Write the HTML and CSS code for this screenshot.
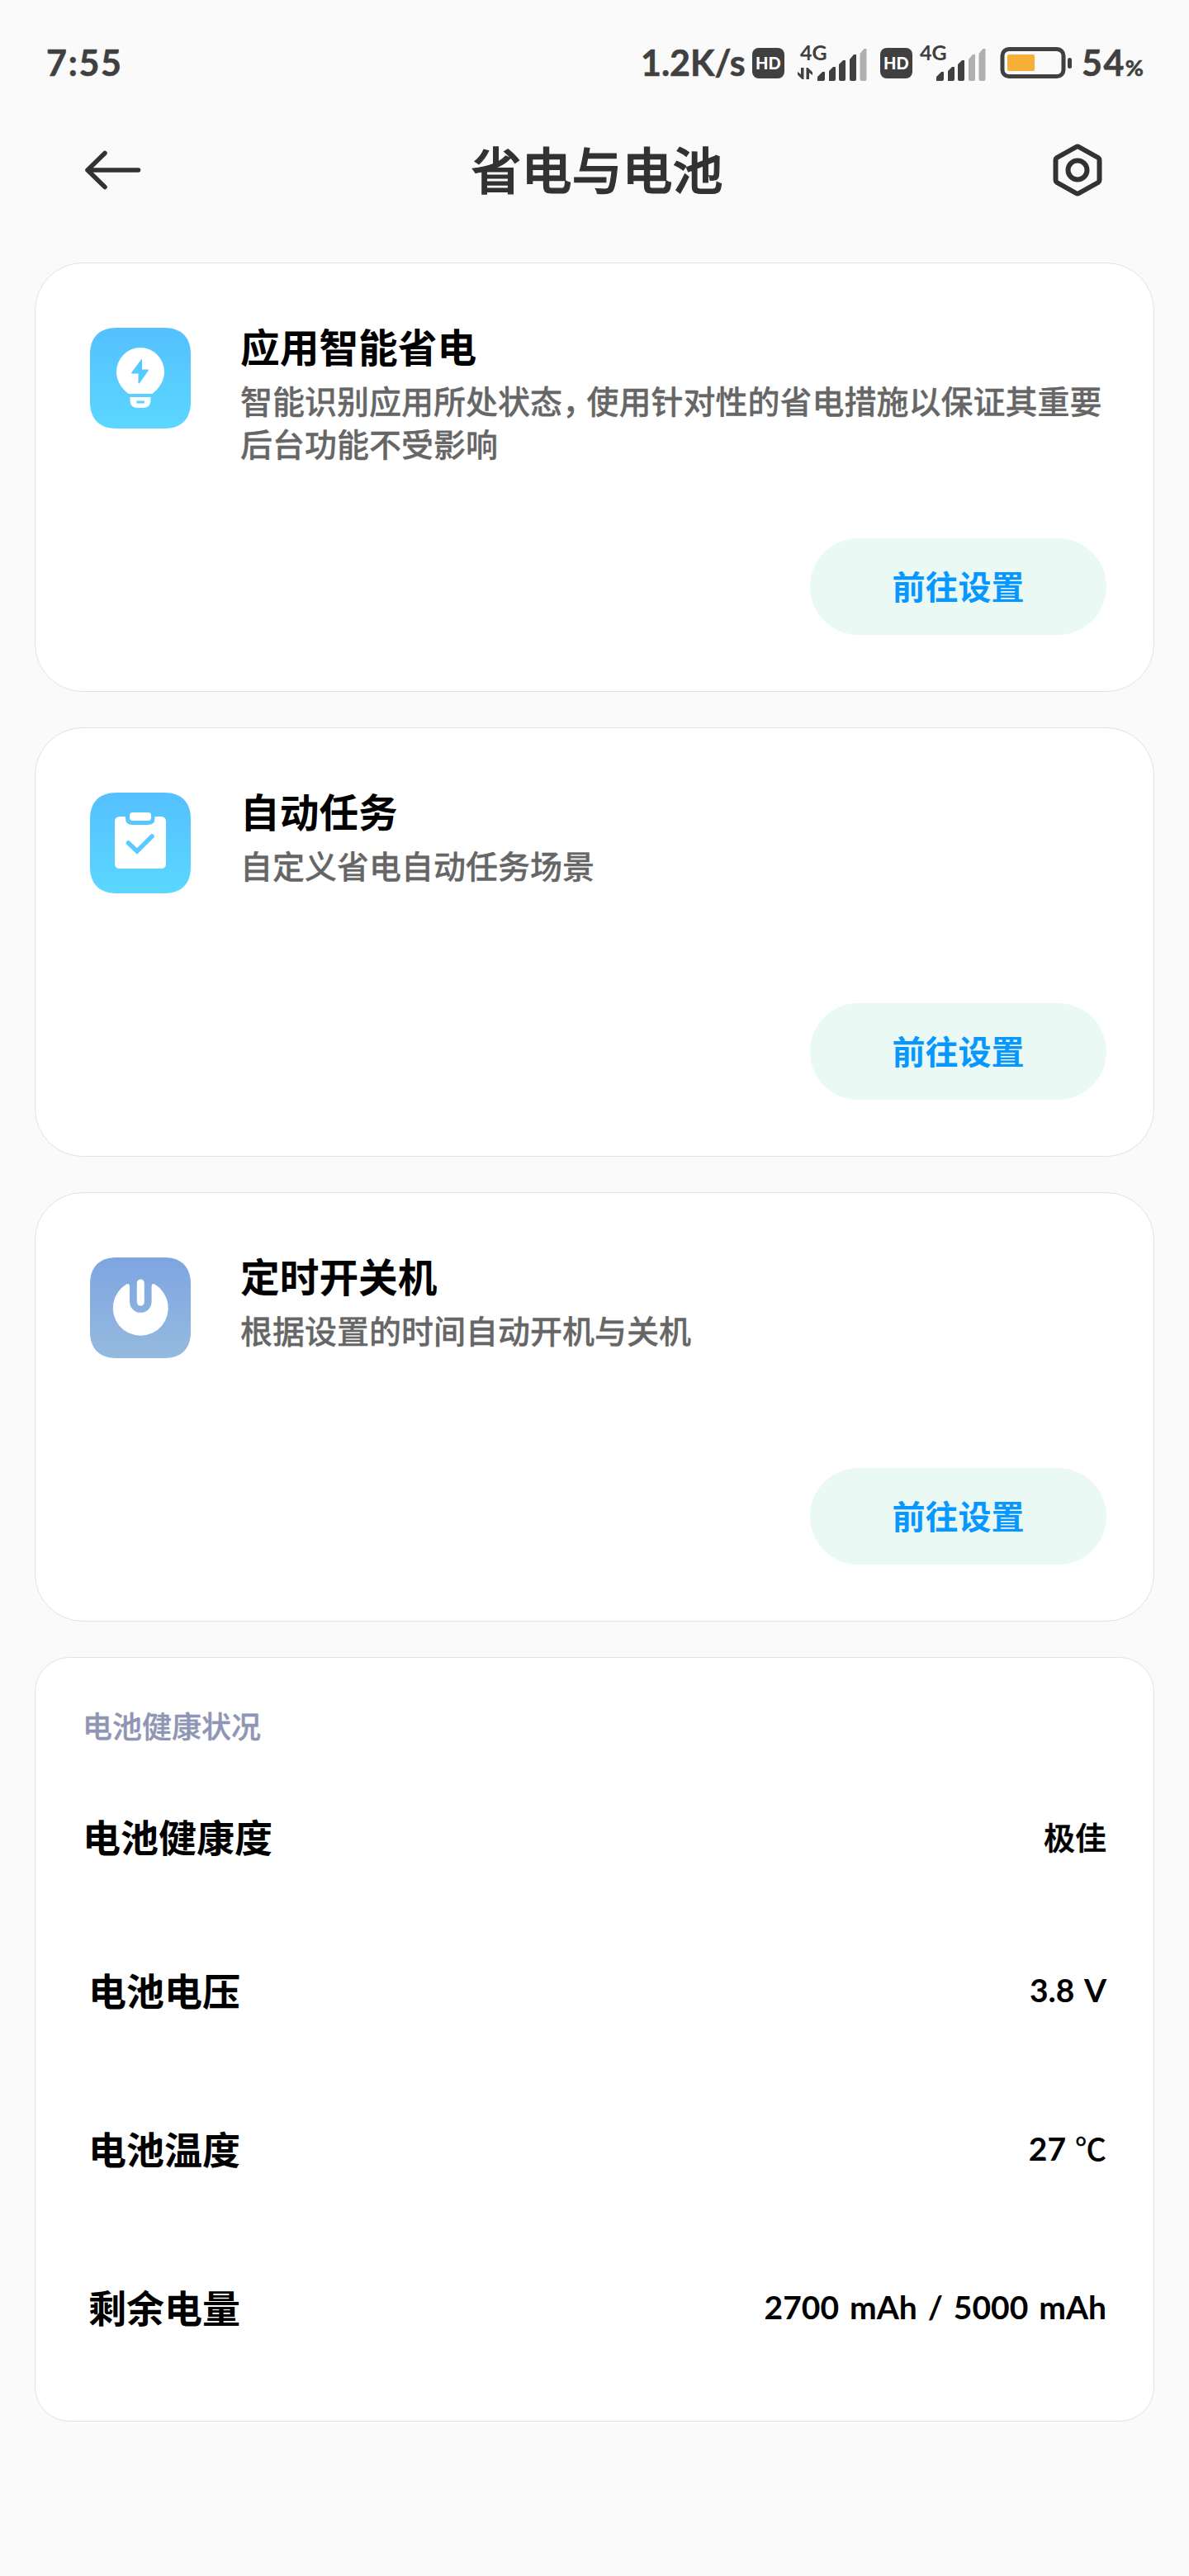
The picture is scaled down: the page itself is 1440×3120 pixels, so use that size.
FILE: index.html
```html
<!DOCTYPE html>
<html lang="zh-CN">
<head>
    <meta charset="UTF-8">
    <meta name="viewport" content="width=device-width, initial-scale=1.0">
    <title>省电与电池</title>
    <link rel="stylesheet" href="styles.css">
</head>
<body>
    <div class="status-bar">
        <span class="time">7:55</span>
        <div class="status-right">
            <span class="speed">1.2K/s</span>
            <span class="hd">HD</span>
            <div class="signal signal-first">
                <span class="network">4G</span>
                <svg width="86" height="44" viewBox="0 0 86 44" fill="#404040">
                    <path d="M5 28h3.500v14H6.500L1 36.500v-3.500l4 3zM11.500 42V28h2l5.500 5.500v3.500l-4-3v8z"/>
                    <path d="M25 44v-5l6-6h3v9q0 2-2 2zM39 44V32l5-5h3v15q0 2-2 2h-5zM51 42V24l5-5h3v23q0 2-2 2h-4q-2 0-2-2zM64 42V18l5-6h3v30q0 2-2 2h-4q-2 0-2-2z"/>
                    <path fill="#b0b0b0" d="M76.500 42V11l5-6h3v37q0 2-2 2h-4q-2 0-2-2z"/>
                </svg>
            </div>
            <span class="hd hd-second">HD</span>
            <div class="signal signal-second">
                <span class="network">4G</span>
                <svg width="86" height="44" viewBox="0 0 86 44" fill="#404040">
                    <path d="M25 44v-5l6-6h3v9q0 2-2 2zM39 44V32l5-5h3v15q0 2-2 2h-5zM51 42V24l5-5h3v23q0 2-2 2h-4q-2 0-2-2z"/>
                    <path fill="#b0b0b0" d="M64 42V18l5-6h3v30q0 2-2 2h-4q-2 0-2-2zM76.500 42V11l5-6h3v37q0 2-2 2h-4q-2 0-2-2z"/>
                </svg>
            </div>
            <svg class="battery" width="88" height="40" viewBox="0 0 88 40">
                <rect x="3" y="3.500" width="74" height="33" rx="8" fill="none" stroke="#404040" stroke-width="5"/>
                <rect x="9" y="10" width="33" height="20" rx="2" fill="#f6b03a"/>
                <rect x="82" y="14" width="5" height="13" rx="2.500" fill="#404040"/>
            </svg>
            <span class="percent">54<small>%</small></span>
        </div>
    </div>

    <div class="header">
        <svg width="70" height="64" viewBox="0 0 70 64" fill="none" stroke="#323232" stroke-width="5.500" stroke-linecap="round" stroke-linejoin="round">
            <path d="M26 11.500L5 32l21 20.500M5 32h61.500"/>
        </svg>
        <h1>省电与电池</h1>
        <svg width="60" height="64" viewBox="0 0 60 64" fill="none" stroke="#323232" stroke-width="6" stroke-linejoin="round">
            <path d="M28.300 4Q30 3 31.700 4L55 17Q56.500 18 56.500 20V44Q56.500 46 55 47L31.700 60Q30 61 28.300 60L5 47Q3.500 46 3.500 44V20Q3.500 18 5 17Z"/>
            <circle cx="30" cy="32" r="11.500"/>
        </svg>
    </div>

    <div class="cards">
        <div class="card">
            <div class="card-main">
                <svg class="app-icon" width="122" height="122" viewBox="0 0 122 122">
                    <defs>
                        <linearGradient id="sky" x1="0" y1="0" x2="0" y2="1">
                            <stop offset="0" stop-color="#54c0ff"/>
                            <stop offset="1" stop-color="#5bd7ff"/>
                        </linearGradient>
                        <mask id="bulb">
                            <path fill="#fff" d="M46 79.500C38 73 32 64 32 53.500a29 29.500 0 0 1 58 0C90 64 84 73 76 79.500Q75 80 73 80H49Q47 80 46 79.500zM48.500 84H73.500V87.500Q73.500 97 64 97H58Q48.500 97 48.500 87.500z"/>
                            <path fill="#000" d="M62 38.500q1-1.500 1 .5v11.500h7q1.500 0 .8 1.200L60 67q-1.500 1.500-1.500-.5v-11H51q-1.500 0-.8-1.200zM56.500 88.500h9.500v3h-9.500z"/>
                        </mask>
                    </defs>
                    <path fill="url(#sky)" d="M32 0H90C111 0 122 12 122 32V90C122 110 111 122 90 122H32C11 122 0 110 0 90V32C0 12 11 0 32 0z"/>
                    <rect width="122" height="122" fill="#fff" mask="url(#bulb)"/>
                </svg>
                <div class="card-text">
                    <h2>应用智能省电</h2>
                    <p>智能识别应用所处状态<span class="comma">，</span>使用针对性的省电措施以保证其重要<br>后台功能不受影响</p>
                </div>
            </div>
            <button class="go-btn">前往设置</button>
        </div>

        <div class="card">
            <div class="card-main">
                <svg class="app-icon" width="122" height="122" viewBox="0 0 122 122">
                    <path fill="url(#sky)" d="M32 0H90C111 0 122 12 122 32V90C122 110 111 122 90 122H32C11 122 0 110 0 90V32C0 12 11 0 32 0z"/>
                    <path fill="#fff" d="M36 29h7v2q0 8 8 8h19.500q8 0 8-8v-2H86q6 0 6 6v51q0 6-6 6H36q-6 0-6-6V35q0-6 6-6z"/>
                    <rect x="48" y="24" width="26" height="10" rx="3.500" fill="#fff"/>
                    <path d="M46.500 61L57 71l18-18" fill="none" stroke="#59cbff" stroke-width="5.500" stroke-linecap="round"/>
                </svg>
                <div class="card-text">
                    <h2>自动任务</h2>
                    <p>自定义省电自动任务场景</p>
                </div>
            </div>
            <button class="go-btn">前往设置</button>
        </div>

        <div class="card">
            <div class="card-main">
                <svg class="app-icon" width="122" height="122" viewBox="0 0 122 122">
                    <defs>
                        <linearGradient id="steel" x1="0" y1="0" x2="0" y2="1">
                            <stop offset="0" stop-color="#7ea5e1"/>
                            <stop offset="1" stop-color="#95badf"/>
                        </linearGradient>
                    </defs>
                    <path fill="url(#steel)" d="M32 0H90C111 0 122 12 122 32V90C122 110 111 122 90 122H32C11 122 0 110 0 90V32C0 12 11 0 32 0z"/>
                    <path fill="#fff" d="M48 34.500V53.500a13.300 13.300 0 0 0 26.600 0V34.500Q75 31 78.500 32.500A33.500 33.500 0 1 1 44 32.500Q47.500 31 48 34.500z"/>
                    <rect x="56.800" y="26.500" width="9" height="32" rx="4.500" fill="#fff"/>
                </svg>
                <div class="card-text">
                    <h2>定时开关机</h2>
                    <p>根据设置的时间自动开机与关机</p>
                </div>
            </div>
            <button class="go-btn">前往设置</button>
        </div>

        <div class="card health">
            <h3>电池健康状况</h3>
            <div class="row row-first">
                <span class="label">电池健康度</span>
                <span class="value value-cjk">极佳</span>
            </div>
            <div class="row">
                <span class="label">电池电压</span>
                <span class="value">3.8 V</span>
            </div>
            <div class="row">
                <span class="label">电池温度</span>
                <span class="value">27 <span class="unit">℃</span></span>
            </div>
            <div class="row">
                <span class="label">剩余电量</span>
                <span class="value">2700 mAh / 5000 mAh</span>
            </div>
        </div>
    </div>
</body>
</html>
```
FILE: styles.css
```css
:root {
    --background: #fafafa;
    --status: #404040;
    --ink: #323232;
    --blue: #0797ff;
}

* {
    margin: 0;
    padding: 0;
    box-sizing: border-box;
}

body {
    font-family: 'Noto Sans CJK SC', sans-serif;
    background: var(--background);
    color: #000;
    min-height: 100vh;
}

svg {
    display: block;
    flex-shrink: 0;
}

.status-bar {
    height: 152px;
    padding: 0 55px 0 56px;
    display: flex;
    justify-content: space-between;
    align-items: center;
    font-family: 'Lato', sans-serif;
    font-weight: 700;
    font-size: 43px;
    line-height: 52px;
    color: var(--status);
    white-space: nowrap;
}

.time {
    letter-spacing: 1.7px;
    -webkit-text-stroke: 0.6px var(--status);
}

.status-right {
    display: flex;
    align-items: center;
}

.speed {
    width: 135px;
    -webkit-text-stroke: 0.6px var(--status);
}

.hd {
    width: 39px;
    height: 37px;
    border-radius: 8px;
    background: var(--status);
    color: #fff;
    font-size: 20px;
    font-weight: 900;
    line-height: 37px;
    text-align: center;
}

.signal {
    position: relative;
    margin-left: 15px;
}

.network {
    position: absolute;
    top: -4px;
    left: 4px;
    font-size: 25px;
    line-height: 26px;
}

.hd-second {
    margin-left: 15px;
}

.signal-second {
    margin-left: 4px;
}

.signal-second .network {
    left: 5px;
}

.battery {
    margin-left: 16px;
}

.percent {
    margin-left: 11px;
    letter-spacing: 1.5px;
    -webkit-text-stroke: 0.6px var(--status);
}

.percent small {
    font-size: 27px;
    line-height: 1;
    letter-spacing: 0;
}

.header {
    height: 108px;
    padding: 0 105px 0 101px;
    display: flex;
    justify-content: space-between;
    align-items: center;
}

.header h1 {
    padding-bottom: 4px;
    font-size: 61px;
    font-weight: 500;
    line-height: 80px;
    color: var(--ink);
    -webkit-text-stroke: 1.2px var(--ink);
}

.cards {
    padding: 58px 42px 0;
    display: flex;
    flex-direction: column;
    gap: 43px;
}

.card {
    height: 520px;
    padding: 70px 57px 68px 66px;
    background: #fff;
    border: 1px solid #e2e2e2;
    border-radius: 58px;
    display: flex;
    flex-direction: column;
    justify-content: space-between;
}

.card-main {
    display: flex;
    gap: 60px;
}

.app-icon {
    margin-top: 8px;
}

.card-text h2 {
    font-size: 47.7px;
    font-weight: 700;
    line-height: 60px;
    margin-bottom: 9px;
}

.card-text p {
    font-size: 39px;
    font-weight: 500;
    line-height: 52px;
    color: #666;
    white-space: nowrap;
    -webkit-text-stroke: 0.3px #666;
}

/* half-width punctuation */
.comma {
    font-feature-settings: 'halt';
    margin-right: 10px;
}

.go-btn {
    align-self: flex-end;
    width: 359px;
    height: 117px;
    padding-bottom: 4px;
    border: none;
    border-radius: 59px;
    background: #eaf9f3;
    color: var(--blue);
    font-family: inherit;
    font-size: 40px;
    font-weight: 700;
    line-height: 60px;
}

.health {
    height: 926px;
    padding: 56px 57px 0 57px;
    border-radius: 42px;
    justify-content: flex-start;
}

.health h3 {
    font-size: 36px;
    font-weight: 500;
    line-height: 50px;
    color: #8f96b4;
    margin-bottom: 21px;
    -webkit-text-stroke: 0.4px #8f96b4;
}

.row {
    height: 192px;
    padding-left: 7px;
    display: flex;
    justify-content: space-between;
    align-items: center;
}

.row-first {
    height: 179px;
    padding-left: 0;
}

.label {
    padding-bottom: 3px;
    font-size: 46px;
    font-weight: 700;
    line-height: 60px;
}

.value {
    font-family: 'Lato', 'Noto Sans CJK SC', sans-serif;
    font-size: 39px;
    font-weight: 700;
    line-height: 60px;
    word-spacing: 3.5px;
}

.value-cjk {
    font-size: 38px;
    font-weight: 500;
    -webkit-text-stroke: 0.6px #000;
}

.unit {
    font-size: 38px;
    font-weight: 500;
    margin-left: -2px;
}
```
